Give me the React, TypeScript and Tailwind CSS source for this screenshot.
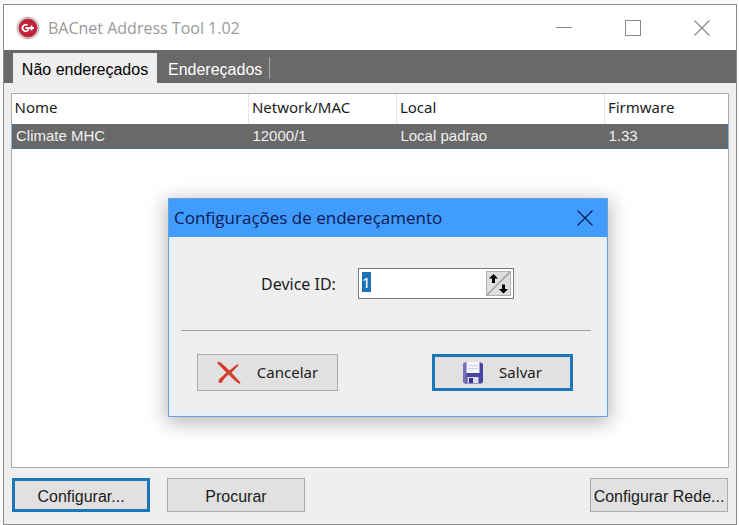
import React, { useEffect, useRef, useState } from "react";

interface Device {
  name: string;
  network: string;
  local: string;
  firmware: string;
}

const devices: Device[] = [
  {
    name: "Climate MHC",
    network: "12000/1",
    local: "Local padrao",
    firmware: "1.33",
  },
];

const AppLogo: React.FC = () => (
  <svg className="w-6 h-6 shrink-0" viewBox="0 0 24 24" fill="none">
    <circle cx="12" cy="12" r="11" fill="#e0d0d2" stroke="#c4b0b3" />
    <circle cx="12" cy="12" r="9" fill="#c31f38" stroke="#a33445" />
    <path
      d="M11.500 9.300A3.200 3.200 0 1 0 12.200 14V12H9.500M12 12H18M15.500 9.500V14.500"
      stroke="#fff"
      strokeWidth="1.8"
    />
  </svg>
);

const CloseIcon: React.FC = () => (
  <svg className="w-4 h-4" viewBox="0 0 16 16" fill="none" stroke="currentColor">
    <path d="M0.5 0.5L15.5 15.5M15.5 0.5L0.5 15.5" strokeWidth="1.2" />
  </svg>
);

const CancelIcon: React.FC = () => (
  <svg className="w-6 h-6" viewBox="0 0 24 24">
    <path
      d="M0 2L2 0.5C7 4 10 7.500 12.500 9.500L20.500 3L21.500 4.500L14.500 11.500C17.500 15 20.500 18.500 23.500 21.500L22.500 23C18.500 20.500 15.500 17.500 11.500 13.500C8.500 16 6 19 4.500 22L1.500 21.500L2 18.500L9.500 11.500C6 8 3 5 0 2Z"
      fill="#d6392c"
    />
    <path d="M8.500 14.500L14.500 8.500L13.500 12L16 15L11.500 12.500Z" fill="#b5601d" />
  </svg>
);

const SaveIcon: React.FC = () => (
  <svg className="w-5 h-[22px]" viewBox="0 0 20 22">
    <path d="M0 2L2 0.500H18L20 2V20L18.500 21.500H2L0 20Z" fill="#4a44a0" />
    <path d="M0 2L2 0.500H3.500V21.500H2L0 20Z" fill="#7470b8" />
    <rect x="3.500" y="0" width="13" height="11" fill="#f4f4fa" />
    <path d="M5 3.500H15M5 6.500H15" stroke="#d0d0dc" />
    <rect x="4.500" y="15" width="11" height="6" fill="#dcdce8" />
    <rect x="6" y="16" width="4" height="5" fill="#37318c" />
  </svg>
);

interface PushButtonProps {
  children: React.ReactNode;
  highlighted?: boolean;
  className?: string;
  onClick?: () => void;
}

const PushButton: React.FC<PushButtonProps> = ({
  children,
  highlighted = false,
  className = "h-[34px] w-[138px] pt-[3px] text-base",
  onClick,
}) => (
  <button
    type="button"
    onClick={onClick}
    className={`flex shrink-0 items-center justify-center whitespace-nowrap bg-[#e1e1e1] text-[#1c1c1c] ${
      highlighted ? "border-3 border-[#1b78b8]" : "border border-[#adadad]"
    } ${className}`}
  >
    {children}
  </button>
);

const AddressDialog: React.FC<{ onClose: () => void }> = ({ onClose }) => {
  const [deviceId, setDeviceId] = useState("1");
  const inputRef = useRef<HTMLInputElement>(null);

  useEffect(() => {
    inputRef.current?.focus();
    inputRef.current?.select();
  }, []);

  const step = (delta: number) =>
    setDeviceId(String(Math.max(0, Number(deviceId) + delta)));

  return (
    <div
      role="dialog"
      aria-labelledby="dialog-title"
      className="absolute left-[164px] top-[193px] w-[440px] border border-[#6da0d4] bg-[#efefef] shadow-[0_4px_18px_2px_rgba(0,0,0,0.28)] font-['Noto_Sans',sans-serif]"
    >
      <header className="flex h-[38px] items-center justify-between bg-[#409cff] pl-[5px] pr-[14px] text-[#0c1a52]">
        <h2 id="dialog-title" className="font-['Open_Sans',sans-serif] text-[17px]">
          Configurações de endereçamento
        </h2>
        <button type="button" aria-label="Fechar" onClick={onClose}>
          <CloseIcon />
        </button>
      </header>

      <div className="border-4 border-t-0 border-[#e6f1fb] pl-2 pr-3">
        <div className="flex h-[93px] items-center pl-20">
          <label htmlFor="device-id" className="w-[97px] text-base text-[#1c1c1c]">
            Device ID:
          </label>
          <div className="flex h-[31px] w-[156px] items-center border border-[#7a7a7a] bg-white pl-[3px] pr-[2px]">
            <input
              id="device-id"
              ref={inputRef}
              value={deviceId}
              onChange={(e) => setDeviceId(e.target.value)}
              className="min-w-0 flex-1 pb-1 text-[15px] leading-5 outline-none selection:bg-[#1f72b8] selection:text-white"
            />
            <div className="relative h-[25px] w-[25px] border border-[#b0b0b0] bg-[#dedede]">
              <svg className="h-full w-full" viewBox="0 0 23 23">
                <path d="M0 23L23 0" stroke="#a0a0a0" strokeWidth="1.5" />
                <path d="M6.500 2L11 6.500H8V11H5V6.500H2Z" fill="#000" />
                <path d="M16.500 21.500L12 17H15V12.500H18V17H21Z" fill="#000" />
              </svg>
              <button
                type="button"
                aria-label="Aumentar"
                onClick={() => step(1)}
                className="absolute left-0 top-0 h-3 w-3"
              />
              <button
                type="button"
                aria-label="Diminuir"
                onClick={() => step(-1)}
                className="absolute bottom-0 right-0 h-3 w-3"
              />
            </div>
          </div>
        </div>
        <hr className="border-[#a0a0a0]" />
        <div className="flex justify-between pb-[21px] pl-4 pr-[18px] pt-[23px]">
          <PushButton className="h-[37px] w-[141px] gap-4 text-[15px]" onClick={onClose}>
            <CancelIcon />
            Cancelar
          </PushButton>
          <PushButton highlighted className="h-[37px] w-[141px] gap-4 text-[15px]" onClick={onClose}>
            <SaveIcon />
            Salvar
          </PushButton>
        </div>
      </div>
    </div>
  );
};

const App: React.FC = () => {
  const [dialogOpen, setDialogOpen] = useState(true);

  return (
    <div className="flex min-h-screen flex-col bg-[#fafafa] pl-[3px] pr-[2px] pt-1 font-['Liberation_Sans',sans-serif]">
      <main className="relative flex flex-1 flex-col border border-[#8c8c8c] bg-[#efefef]">
        {/* Title bar */}
        <header className="flex h-[45px] items-center bg-white pl-3 pr-[26px] text-[#999]">
          <AppLogo />
          <h1 className="ml-2 flex-1 font-['Open_Sans',sans-serif] text-base">
            BACnet Address Tool 1.02
          </h1>
          <div className="flex items-center gap-[53px] text-[#8a8a8a]">
            <button type="button" aria-label="Minimizar" className="flex h-4 w-4 items-center">
              <span className="h-px w-full bg-current" />
            </button>
            <button
              type="button"
              aria-label="Maximizar"
              className="h-4 w-4 border border-current"
            />
            <button type="button" aria-label="Fechar">
              <CloseIcon />
            </button>
          </div>
        </header>

        {/* Tabs */}
        <nav role="tablist" className="flex h-[33px] items-end bg-[#696969] pl-[9px] text-base">
          <button
            type="button"
            role="tab"
            aria-selected="true"
            className="h-[30px] w-36 bg-[#efefef] pt-[3px] text-black"
          >
            Não endereçados
          </button>
          <button
            type="button"
            role="tab"
            aria-selected="false"
            className="h-[30px] pl-[11px] pt-[3px] text-white"
          >
            Endereçados
          </button>
          <span className="mb-1 ml-[7px] h-[22px] w-px bg-[#a8a8a8]" />
        </nav>

        {/* Device list */}
        <div className="mx-[7px] mt-[10px] flex-1 border border-[#adadad] bg-white">
          <table className="w-full table-fixed border-collapse text-left">
            <thead className="font-['Noto_Sans',sans-serif] text-[15px] text-[#1c1c1c]">
              <tr className="h-[30px]">
                <th className="w-[33%] pb-[3px] pl-[2px] font-normal">Nome</th>
                <th className="w-[148px] border-l border-[#e5e5e5] pb-[3px] pl-[3px] font-normal">
                  Network/MAC
                </th>
                <th className="w-[208px] border-l border-[#e5e5e5] pb-[3px] pl-[3px] font-normal">
                  Local
                </th>
                <th className="border-l border-[#e5e5e5] pb-[3px] pl-[3px] font-normal">
                  Firmware
                </th>
              </tr>
            </thead>
            <tbody className="text-[15px] text-[#f0f0f0]">
              {devices.map((device) => (
                <tr
                  key={device.name}
                  className="h-6 border border-t-0 border-[#3f6f92] bg-[#696969]"
                >
                  <td className="pl-[3px]">{device.name}</td>
                  <td className="pl-1">{device.network}</td>
                  <td className="pl-1">{device.local}</td>
                  <td className="pl-1">{device.firmware}</td>
                </tr>
              ))}
            </tbody>
          </table>
        </div>

        <footer className="flex gap-[17px] pb-3 pl-2 pr-2 pt-[10px]">
          <PushButton highlighted onClick={() => setDialogOpen(true)}>
            Configurar...
          </PushButton>
          <PushButton>Procurar</PushButton>
          <div className="ml-auto">
            <PushButton>Configurar Rede...</PushButton>
          </div>
        </footer>

        {dialogOpen && <AddressDialog onClose={() => setDialogOpen(false)} />}
      </main>
    </div>
  );
};

export default App;
